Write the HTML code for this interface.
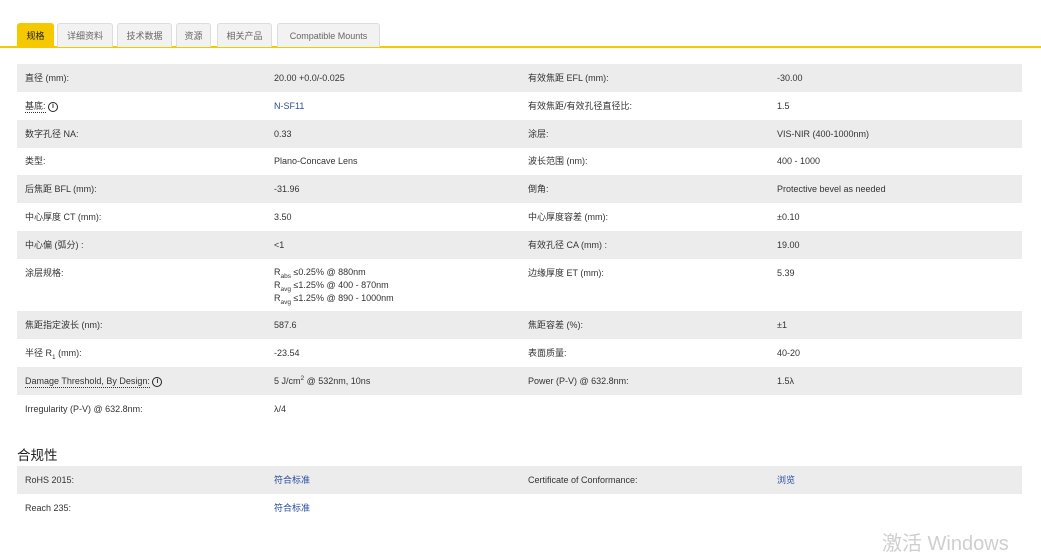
<!DOCTYPE html>
<html><head><meta charset="utf-8"><style>
body{margin:0;width:1041px;height:541px;overflow:hidden;background:#fff;font-family:"Liberation Sans","Noto Sans CJK SC",sans-serif;font-size:9px;color:#333}
.tabs{position:absolute;top:22px;left:0;width:1041px;height:24px;border-bottom:2px solid #f5c800}
.tab{position:absolute;top:1px;height:23px;line-height:25px;background:#f2f2f2;border:1px solid #ddd;border-bottom:none;border-radius:3px 3px 0 0;text-align:center;color:#666;font-size:9px}
.tab.a{background:#f5c800;color:#222;border-color:#f5c800}
.row{position:absolute;left:17px;width:1005px;height:28px}
.g{background:#ececec}
.c{position:absolute;top:0;height:28px;line-height:28px;white-space:nowrap;color:#333}
.l1{left:8px}.v1{left:257px}.l2{left:511px}.v2{left:760px}
a{color:#2a4f9e;text-decoration:none}
.u{border-bottom:1px dotted #333;line-height:12px;display:inline-block}
.i{display:inline-block;width:8px;height:8px;border:1.3px solid #222;border-radius:50%;font-size:7px;line-height:8px;text-align:center;font-weight:bold;vertical-align:middle}
sub,sup{font-size:6.5px;line-height:0}
.m{position:absolute;left:257px;top:7px;line-height:13px;white-space:nowrap}
</style></head><body>
<div class="tabs">
<div class="tab a" style="left:17px;width:35px">规格</div>
<div class="tab" style="left:57px;width:54px">详细资料</div>
<div class="tab" style="left:117px;width:53px">技术数据</div>
<div class="tab" style="left:176px;width:33px">资源</div>
<div class="tab" style="left:217px;width:53px">相关产品</div>
<div class="tab" style="left:277px;width:101px">Compatible Mounts</div>
</div>
<div class="row g" style="top:64px"><span class="c l1">直径 (mm):</span><span class="c v1">20.00 +0.0/-0.025</span><span class="c l2">有效焦距 EFL (mm):</span><span class="c v2">-30.00</span></div>
<div class="row" style="top:92px"><span class="c l1"><span class="u">基底:</span> <span class="i">i</span></span><span class="c v1"><a>N-SF11</a></span><span class="c l2">有效焦距/有效孔径直径比:</span><span class="c v2">1.5</span></div>
<div class="row g" style="top:120px"><span class="c l1">数字孔径 NA:</span><span class="c v1">0.33</span><span class="c l2">涂层:</span><span class="c v2">VIS-NIR (400-1000nm)</span></div>
<div class="row" style="top:147px"><span class="c l1">类型:</span><span class="c v1">Plano-Concave Lens</span><span class="c l2">波长范围 (nm):</span><span class="c v2">400 - 1000</span></div>
<div class="row g" style="top:175px"><span class="c l1">后焦距 BFL (mm):</span><span class="c v1">-31.96</span><span class="c l2">倒角:</span><span class="c v2">Protective bevel as needed</span></div>
<div class="row" style="top:203px"><span class="c l1">中心厚度 CT (mm):</span><span class="c v1">3.50</span><span class="c l2">中心厚度容差 (mm):</span><span class="c v2">±0.10</span></div>
<div class="row g" style="top:231px"><span class="c l1">中心偏 (弧分) :</span><span class="c v1">&lt;1</span><span class="c l2">有效孔径 CA (mm) :</span><span class="c v2">19.00</span></div>
<div class="row" style="top:259px;height:52px"><span class="c l1">涂层规格:</span><div class="m">R<sub>abs</sub> ≤0.25% @ 880nm<br>R<sub>avg</sub> ≤1.25% @ 400 - 870nm<br>R<sub>avg</sub> ≤1.25% @ 890 - 1000nm</div><span class="c l2">边缘厚度 ET (mm):</span><span class="c v2">5.39</span></div>
<div class="row g" style="top:311px"><span class="c l1">焦距指定波长 (nm):</span><span class="c v1">587.6</span><span class="c l2">焦距容差 (%):</span><span class="c v2">±1</span></div>
<div class="row" style="top:339px"><span class="c l1">半径 R<sub>1</sub> (mm):</span><span class="c v1">-23.54</span><span class="c l2">表面质量:</span><span class="c v2">40-20</span></div>
<div class="row g" style="top:367px"><span class="c l1"><span class="u">Damage Threshold, By Design:</span> <span class="i">i</span></span><span class="c v1">5 J/cm<sup>2</sup> @ 532nm, 10ns</span><span class="c l2">Power (P-V) @ 632.8nm:</span><span class="c v2">1.5λ</span></div>
<div class="row" style="top:395px"><span class="c l1">Irregularity (P-V) @ 632.8nm:</span><span class="c v1">λ/4</span></div>
<div style="position:absolute;left:17px;top:444px;font-size:13.5px;color:#222">合规性</div>
<div class="row g" style="top:466px"><span class="c l1">RoHS 2015:</span><span class="c v1"><a>符合标准</a></span><span class="c l2">Certificate of Conformance:</span><span class="c v2"><a>浏览</a></span></div>
<div class="row" style="top:494px"><span class="c l1">Reach 235:</span><span class="c v1"><a>符合标准</a></span></div>
<div style="position:absolute;left:882px;top:527px;font-size:20px;color:#cfcfcf">激活 Windows</div>
</body></html>
